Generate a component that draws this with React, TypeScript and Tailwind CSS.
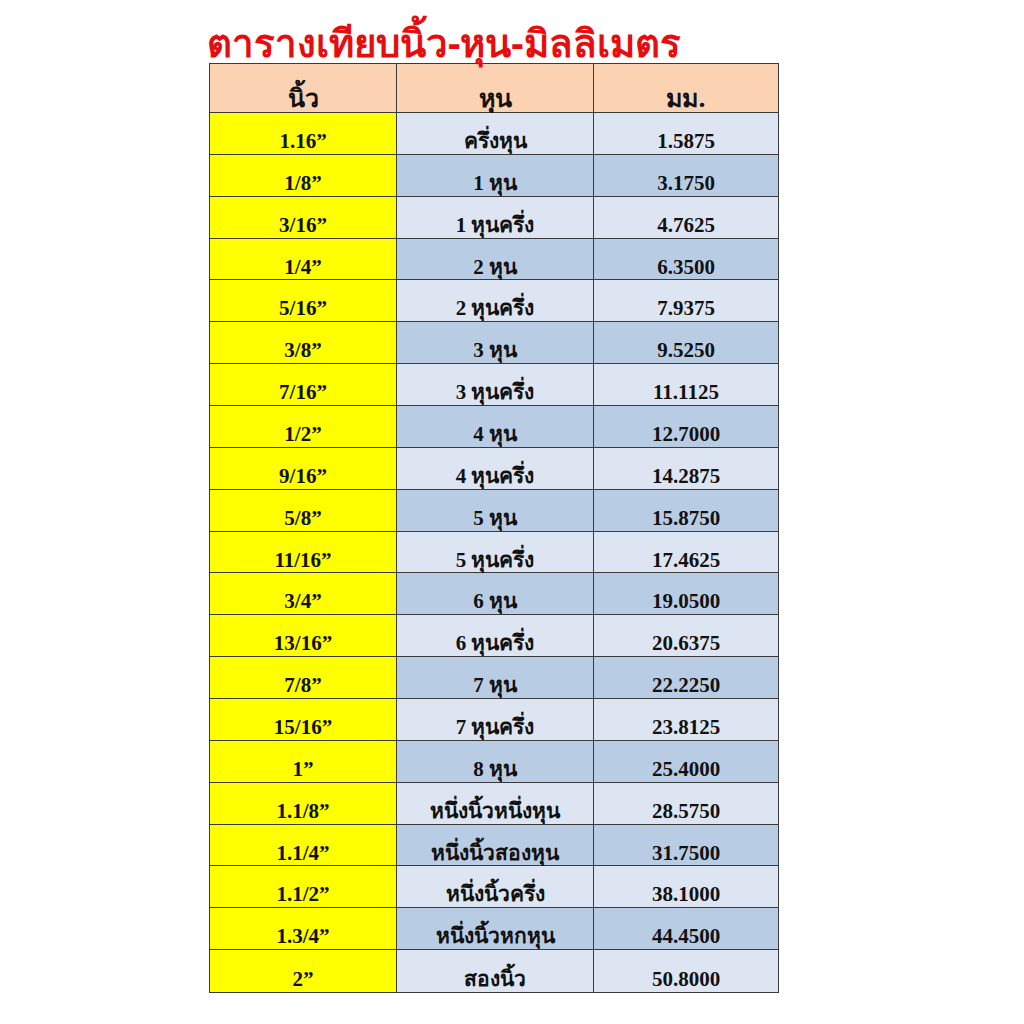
const rows: [string, string, string][] = [
  ["1.16”", "ครึ่งหุน", "1.5875"],
  ["1/8”", "1 หุน", "3.1750"],
  ["3/16”", "1 หุนครึ่ง", "4.7625"],
  ["1/4”", "2 หุน", "6.3500"],
  ["5/16”", "2 หุนครึ่ง", "7.9375"],
  ["3/8”", "3 หุน", "9.5250"],
  ["7/16”", "3 หุนครึ่ง", "11.1125"],
  ["1/2”", "4 หุน", "12.7000"],
  ["9/16”", "4 หุนครึ่ง", "14.2875"],
  ["5/8”", "5 หุน", "15.8750"],
  ["11/16”", "5 หุนครึ่ง", "17.4625"],
  ["3/4”", "6 หุน", "19.0500"],
  ["13/16”", "6 หุนครึ่ง", "20.6375"],
  ["7/8”", "7 หุน", "22.2250"],
  ["15/16”", "7 หุนครึ่ง", "23.8125"],
  ["1”", "8 หุน", "25.4000"],
  ["1.1/8”", "หนึ่งนิ้วหนึ่งหุน", "28.5750"],
  ["1.1/4”", "หนึ่งนิ้วสองหุน", "31.7500"],
  ["1.1/2”", "หนึ่งนิ้วครึ่ง", "38.1000"],
  ["1.3/4”", "หนึ่งนิ้วหกหุน", "44.4500"],
  ["2”", "สองนิ้ว", "50.8000"],
];

const serif = "font-['Liberation_Serif','Noto_Sans',serif]";
const cell = "flex items-center justify-center";
const head = "flex items-center justify-center pt-[18px] text-[25px] leading-[28px] font-['Noto_Sans',sans-serif]";

export default function App() {
  return (
    <div className="w-[1024px] h-[1024px] bg-white">
      <div className="pl-[207px] pt-[22px]">
        <h1 className="text-[38.4px] leading-[41px] font-bold text-[#e50d0d] font-['Noto_Sans','DejaVu_Sans',sans-serif]">
          ตารางเทียบนิ้ว-หุน-มิลลิเมตร
        </h1>
      </div>
      <div className="ml-[209px] w-[570px] border border-[#3a3a3a] text-[#111] font-bold">
        <div className="grid grid-cols-[187px_197px_184px] h-[49px] bg-[#fbd3b3] border-b border-[#3a3a3a]">
          <div className={`${head} border-r border-[#3a3a3a]`}>นิ้ว</div>
          <div className={`${head} border-r border-[#3a3a3a]`}>หุน</div>
          <div className={head}>มม.</div>
        </div>
        {rows.map(([inch, hun, mm], i) => {
          const bg = i % 2 === 0 ? "bg-[#dce5f1]" : "bg-[#b8cce4]";
          return (
            <div
              key={inch}
              className={`grid grid-cols-[187px_197px_184px] h-[41.86px] ${i < rows.length - 1 ? "border-b border-[#3a3a3a]" : ""}`}
            >
              <div className={`${cell} bg-[#ffff00] border-r border-[#3a3a3a] text-[21px] leading-[24px] pt-[15px] ${serif}`}>
                {inch}
              </div>
              <div className={`${cell} border-r border-[#3a3a3a] text-[21px] leading-[24px] pt-[15px] ${bg} ${serif}`}>
                {hun}
              </div>
              <div className={`${cell} text-[21px] leading-[24px] pt-[15px] ${bg} ${serif}`}>{mm}</div>
            </div>
          );
        })}
      </div>
    </div>
  );
}
